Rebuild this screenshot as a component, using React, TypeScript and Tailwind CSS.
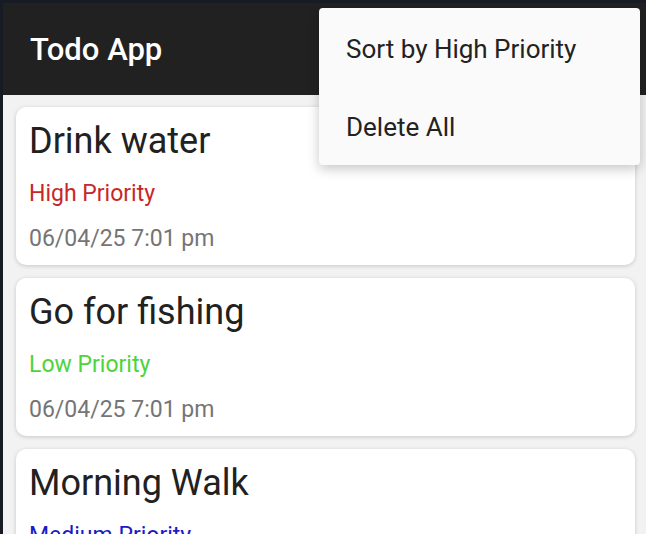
import React from "react";

type Todo = { title: string; priority: string; color: string; date: string };

const todos: Todo[] = [
  { title: "Drink water", priority: "High Priority", color: "text-[#c62828]", date: "06/04/25 7:01 pm" },
  { title: "Go for fishing", priority: "Low Priority", color: "text-[#4cd43c]", date: "06/04/25 7:01 pm" },
  { title: "Morning Walk", priority: "Medium Priority", color: "text-[#1a1ac8]", date: "06/04/25 7:01 pm" },
];

function Card({ t }: { t: Todo }) {
  return (
    <div className="bg-white rounded-[10px] shadow-[0_1px_4px_rgba(0,0,0,0.18)] pt-[13px] pb-[13px] pl-[13px] pr-[14px] flex flex-col gap-[18px]">
      <div className="text-[36px] leading-[42px] text-[#212121]">{t.title}</div>
      <div className={`text-[23px] leading-[27px] ${t.color}`}>{t.priority}</div>
      <div className="text-[23px] leading-[27px] text-[#757575]">{t.date}</div>
    </div>
  );
}

export default function App() {
  return (
    <div
      className="relative w-[646px] h-[534px] overflow-hidden bg-[#f2f2f2] border-l-[3px] border-t-[3px] border-[#171b23]"
      style={{ fontFamily: "Roboto, 'Noto Sans', sans-serif" }}
    >
      <div className="h-[92px] bg-[#212121] flex items-center pl-[27px]">
        <span className="text-white text-[31px] font-medium leading-none">Todo App</span>
      </div>
      <div className="flex flex-col gap-[13px] pt-[12px] pl-[13px] pr-[11px]">
        {todos.map((t) => (
          <Card key={t.title} t={t} />
        ))}
      </div>
      <div className="absolute left-[316px] top-[5px] w-[321px] bg-[#fafafa] rounded-[4px] shadow-[0_4px_12px_rgba(0,0,0,0.22)] flex flex-col">
        <div className="h-[80px] pt-[2px] flex items-center pl-[27px] text-[26px] text-[#222222]">Sort by High Priority</div>
        <div className="h-[77px] pt-[2px] flex items-center pl-[27px] text-[26px] text-[#222222]">Delete All</div>
      </div>
    </div>
  );
}
